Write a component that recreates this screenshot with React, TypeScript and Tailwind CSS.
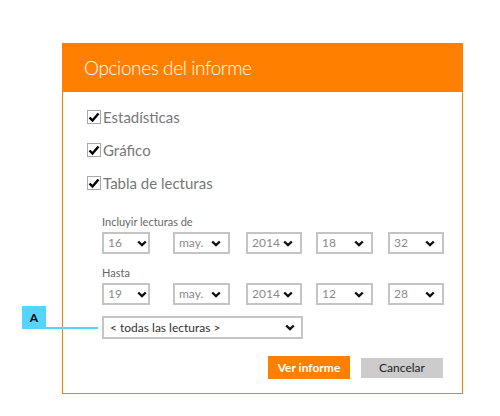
import React from "react";

const Chevron = () => (
  <svg width="10" height="7" viewBox="0 0 10 7" className="shrink-0">
    <polyline points="1.2,1.5 5,5.2 8.8,1.5" fill="none" stroke="#111" strokeWidth="2.4" />
  </svg>
);

const Check = () => (
  <span className="w-[14px] h-[14px] border border-[#a8a8a8] bg-white flex items-center justify-center shrink-0">
    <svg width="12" height="11" viewBox="0 0 12 11">
      <polyline points="1.5,5.5 4.5,8.5 10.5,1.5" fill="none" stroke="#000" strokeWidth="2.4" />
    </svg>
  </span>
);

const Select = ({ value, className = "" }: { value: string; className?: string }) => (
  <div
    className={`h-[22px] border-2 border-[#c4c4c4] bg-white flex items-center justify-between pl-[4px] text-[12px] text-[#8a8a8a] ${className}`}
  >
    <span>{value}</span>
    <Chevron />
  </div>
);

const DateRow = ({ values }: { values: string[] }) => (
  <div className="flex">
    <Select value={values[0]} className="w-[48px] pr-[1px]" />
    <Select value={values[1]} className="w-[57px] ml-[23px] pr-[7px]" />
    <Select value={values[2]} className="w-[56px] ml-[16px] pr-[7px]" />
    <Select value={values[3]} className="w-[57px] ml-[14px] pr-[7px]" />
    <Select value={values[4]} className="w-[56px] ml-[15px] pr-[7px]" />
  </div>
);

const options = ["Estadísticas", "Gráfico", "Tabla de lecturas"];

export default function App() {
  return (
    <div
      className="relative w-[500px] h-[416px] bg-white pt-[43px] pl-[62px]"
      style={{ fontFamily: 'Lato, "Open Sans", sans-serif' }}
    >
      <div className="w-[401px] h-[351px] border border-[#ff8000] bg-white">
        <div className="h-[48px] bg-[#ff8000] flex items-center pl-[21px] text-white text-[19px] tracking-[-0.4px] font-light">
          Opciones del informe
        </div>
        <div className="pl-[24px] pt-[18px]">
          <div className="flex flex-col gap-[19px]">
            {options.map((o) => (
              <div key={o} className="flex items-center gap-[2px] text-[15px] text-[#777] leading-[14px]">
                <Check />
                <span>{o}</span>
              </div>
            ))}
          </div>
          <div className="pl-[15px] pt-[25px]">
            <div className="text-[11px] text-[#666] leading-[14px] mb-[3px]">Incluyir lecturas de</div>
            <DateRow values={["16", "may.", "2014", "18", "32"]} />
            <div className="text-[11px] text-[#666] leading-[14px] mt-[12px] mb-[3px]">Hasta</div>
            <DateRow values={["19", "may.", "2014", "12", "28"]} />
            <div className="w-[201px] h-[23px] mt-[11px] border-2 border-[#c4c4c4] flex items-center justify-between pl-[6px] pr-[6px] text-[12px] text-[#333]">
              <span>&lt; todas las lecturas &gt;</span>
              <Chevron />
            </div>
          </div>
          <div className="flex justify-end items-center gap-[11px] pr-[19px] mt-[17px]">
            <button className="w-[82px] h-[23px] bg-[#ff8000] text-white text-[12px] font-bold">
              Ver informe
            </button>
            <button className="w-[82px] h-[20px] bg-[#cccccc] text-[#222] text-[12px]">
              Cancelar
            </button>
          </div>
        </div>
      </div>
      <div className="absolute left-[22px] top-[306px] w-[24px] h-[23px] bg-[#55d4ff] flex items-center justify-center text-[12px] font-bold text-black">
        A
      </div>
      <div className="absolute left-[46px] top-[327px] w-[52px] h-[2px] bg-[#55d4ff]" />
    </div>
  );
}
